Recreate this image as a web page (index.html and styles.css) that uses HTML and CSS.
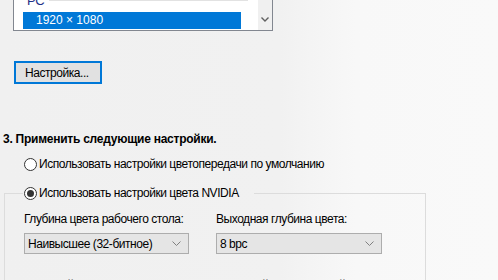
FILE: index.html
```html
<!DOCTYPE html>
<html lang="ru">
<head>
    <meta charset="UTF-8">
    <title>Изменение разрешения</title>
    <link rel="stylesheet" href="styles.css">
</head>
<body>
    <div class="listbox">
        <div class="list">
            <div class="group-head">
                <span>PC</span>
                <span class="group-line"></span>
            </div>
            <div class="list-item selected">1920 × 1080</div>
        </div>
        <div class="scrollbar">
            <svg width="8" height="5" viewBox="0 0 8 5"><path d="M0.5 0.5 L4 4 L7.5 0.5" fill="none" stroke="#606060" stroke-width="1.4"/></svg>
        </div>
    </div>

    <button class="btn">Настройка...</button>

    <h2 class="step">3. Применить следующие настройки.</h2>

    <label class="radio">
        <span class="radio-dot"></span>
        Использовать настройки цветопередачи по умолчанию
    </label>

    <fieldset class="group">
        <legend>
            <label class="radio">
                <span class="radio-dot checked"></span>
                Использовать настройки цвета NVIDIA
            </label>
        </legend>
        <div class="fields">
            <div class="field">
                <div class="field-label">Глубина цвета рабочего стола:</div>
                <div class="select">
                    <span>Наивысшее (32-битное)</span>
                    <svg width="9" height="5" viewBox="0 0 9 5"><path d="M0.5 0.5 L4.5 4.5 L8.5 0.5" fill="none" stroke="#808080" stroke-width="1"/></svg>
                </div>
            </div>
            <div class="field">
                <div class="field-label">Выходная глубина цвета:</div>
                <div class="select">
                    <span>8 bpc</span>
                    <svg width="9" height="5" viewBox="0 0 9 5"><path d="M0.5 0.5 L4.5 4.5 L8.5 0.5" fill="none" stroke="#808080" stroke-width="1"/></svg>
                </div>
            </div>
            <div class="field">
                <div class="field-label">Цветовой формат на выходе:</div>
                <div class="select"><span>RGB</span></div>
            </div>
            <div class="field">
                <div class="field-label">Выходной динамический диапазон:</div>
                <div class="select"><span>Полный</span></div>
            </div>
        </div>
    </fieldset>
</body>
</html>
```

FILE: styles.css
```css
html, body {
    height: 100%;
}
body {
    margin: 0;
    overflow: hidden;
    background: linear-gradient(to right, #f0f0f0 0, #f1f1f1 280px, #f4f4f4 310px, #f8f8f8 356px, #f9f9f9 100%);
    font-family: "Liberation Sans", Roboto, sans-serif;
    font-size: 12px;
    letter-spacing: -0.45px;
    color: #000;
}

/* list of resolutions, top is scrolled away */
.listbox {
    display: flex;
    width: 260px;
    height: 49px;
    margin: -18px 0 0 13px;
    box-sizing: border-box;
    border: 1px solid #828790;
    background: #fff;
}
.list {
    flex: 1;
    padding-top: 9px;
}
.group-head {
    display: flex;
    align-items: center;
    height: 17px;
    margin-bottom: 3px;
    padding-left: 13px;
    margin-right: 10px;
    color: #1e3287;
    font-size: 13px;
}
.group-line {
    flex: 1;
    height: 1px;
    margin-left: 5px;
    background: #e2e2e2;
}
.list-item {
    height: 17px;
    line-height: 17px;
    margin-left: 9px;
    width: 218px;
    padding-left: 13px;
    box-sizing: border-box;
    letter-spacing: 0;
}
.list-item.selected {
    background: #0078d7;
    color: #fff;
}
.scrollbar {
    width: 14px;
    background: #f0f0f0;
    display: flex;
    align-items: flex-end;
    justify-content: center;
    padding-bottom: 8px;
    box-sizing: border-box;
}

.btn {
    display: block;
    width: 88px;
    height: 23px;
    margin: 30px 0 0 14px;
    padding: 0 0 0 9px;
    text-align: left;
    box-sizing: border-box;
    border: 2px solid #0078d7;
    background: #e1e1e1;
    font: inherit;
    letter-spacing: inherit;
    color: #000;
}

.step {
    margin: 47px 0 0 3px;
    font-size: 12px;
    font-weight: 700;
    line-height: 16px;
    letter-spacing: -0.25px;
}

.radio {
    display: flex;
    align-items: center;
    gap: 2px;
    height: 16px;
    margin: 9px 0 0 24px;
}
.radio-dot {
    width: 13px;
    height: 13px;
    box-sizing: border-box;
    border: 1px solid #333;
    border-radius: 50%;
    background: #fff;
    display: flex;
    align-items: center;
    justify-content: center;
}
.radio-dot.checked::after {
    content: "";
    width: 7px;
    height: 7px;
    border-radius: 50%;
    background: #333;
}

.group {
    width: 422px;
    margin: 13px 0 0 4px;
    padding: 10px 0 0 19px;
    box-sizing: border-box;
    border: 1px solid #dcdcdc;
    height: 200px;
}
.group legend {
    margin-left: -1px;
    padding: 0 15px 0 1px;
}
.group legend .radio {
    margin: 0;
}

.fields {
    display: grid;
    grid-template-columns: 165px 166px;
    column-gap: 27px;
    row-gap: 23px;
}
.field-label {
    height: 16px;
    line-height: 16px;
    white-space: nowrap;
}
.select {
    display: flex;
    align-items: center;
    justify-content: space-between;
    height: 21px;
    margin-top: 6px;
    padding: 0 7px 0 3px;
    box-sizing: border-box;
    border: 1px solid #adadad;
    background: #e5e5e5;
}
```
